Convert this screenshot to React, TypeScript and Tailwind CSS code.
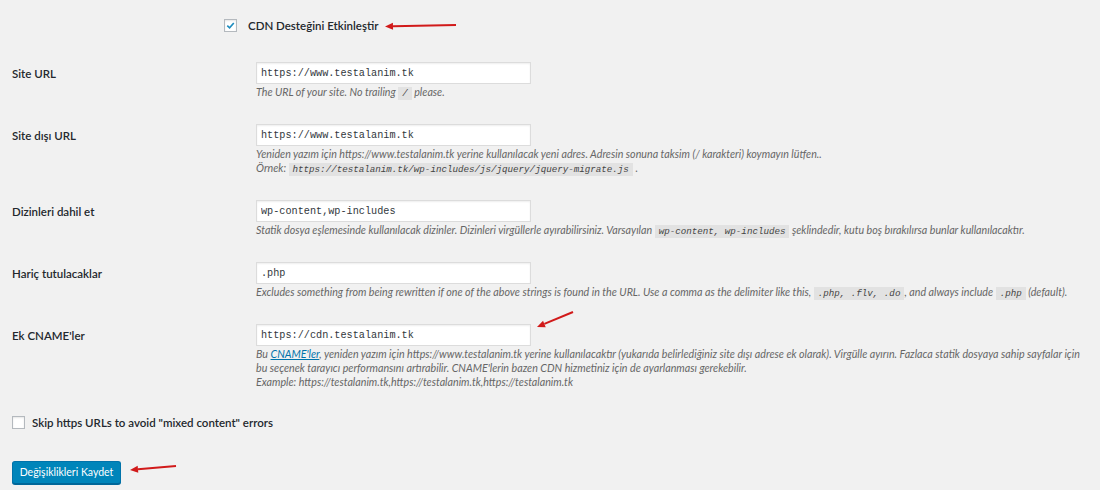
import React from "react"

const label = "text-[11.5px] font-semibold text-[#23282d] leading-[13px]"
const desc = "mt-[1px] text-[10.7px] italic leading-[14px] text-[#666] whitespace-nowrap"
const code = "bg-[#e2e2e2] px-[4px] py-[1px] text-[9.2px] leading-[14px] italic text-[#444]"
const input =
  "block w-[275px] h-[22px] bg-white border border-[#dcdcdc] shadow-[inset_0_1px_2px_rgba(0,0,0,0.07)] px-[4px] text-[10.2px] text-[#32373c] outline-none"

const mono = { fontFamily: "'Liberation Mono', 'DejaVu Sans Mono', monospace" }

function Arrow({ x1, y1, x2, y2 }: { x1: number; y1: number; x2: number; y2: number }) {
  // tail (x1,y1) -> head (x2,y2)
  const a = Math.atan2(y2 - y1, x2 - x1)
  const l = 8
  const w = 3.5
  const bx = x2 - Math.cos(a) * l
  const by = y2 - Math.sin(a) * l
  const px = -Math.sin(a) * w
  const py = Math.cos(a) * w
  return (
    <g>
      <line x1={x1} y1={y1} x2={bx} y2={by} stroke="#d11a1a" strokeWidth={2} />
      <polygon points={`${x2},${y2} ${bx + px},${by + py} ${bx - px},${by - py}`} fill="#d11a1a" />
    </g>
  )
}

function Row({
  name,
  value,
  children
}: {
  name: string
  value: string
  children: React.ReactNode
}) {
  return (
    <div className="flex mt-[23px] first:mt-0">
      <div className="w-[244px] h-[22px] flex items-center">
        <span className={label}>{name}</span>
      </div>
      <div>
        <input className={input} style={mono} defaultValue={value} />
        <div className={desc}>{children}</div>
      </div>
    </div>
  )
}

export default function App() {
  return (
    <div
      className="relative w-full h-[490px] bg-[#f1f1f1] overflow-hidden"
      style={{ fontFamily: "Lato, 'Open Sans', sans-serif" }}
    >
      {/* CDN toggle */}
      <div className="pt-[19px] pl-[224px] flex items-center gap-[11px]">
        <span className="w-[13px] h-[13px] bg-white border border-[#b4b9be] shadow-[inset_0_1px_2px_rgba(0,0,0,0.1)] flex items-center justify-center">
          <svg width="11" height="11" viewBox="0 0 12 12">
            <path d="M2.5 6.2 L5 8.6 L9.6 3.2" fill="none" stroke="#1e8cbe" strokeWidth="1.8" />
          </svg>
        </span>
        <span className={label}>CDN Desteğini Etkinleştir</span>
      </div>

      <div className="pl-[12px] mt-[30px]">
        <Row name="Site URL" value="https://www.testalanim.tk">
          The URL of your site. No trailing{" "}
          <code className={code} style={mono}>/</code> please.
        </Row>

        <Row name="Site dışı URL" value="https://www.testalanim.tk">
          Yeniden yazım için https://www.testalanim.tk yerine kullanılacak yeni adres. Adresin sonuna taksim (/
          karakteri) koymayın lütfen..
          <br />
          Örnek: <code className={code} style={mono}>https://testalanim.tk/wp-includes/js/jquery/jquery-migrate.js</code> .
        </Row>

        <Row name="Dizinleri dahil et" value="wp-content,wp-includes">
          Statik dosya eşlemesinde kullanılacak dizinler. Dizinleri virgüllerle ayırabilirsiniz. Varsayılan{" "}
          <code className={code} style={mono}>wp-content, wp-includes</code> şeklindedir, kutu boş bırakılırsa
          bunlar kullanılacaktır.
        </Row>

        <Row name="Hariç tutulacaklar" value=".php">
          Excludes something from being rewritten if one of the above strings is found in the URL. Use a comma as
          the delimiter like this, <code className={code} style={mono}>.php, .flv, .do</code>, and always include{" "}
          <code className={code} style={mono}>.php</code> (default).
        </Row>

        <Row name="Ek CNAME'ler" value="https://cdn.testalanim.tk">
          Bu <a className="underline text-[#0073aa]">CNAME'ler</a>, yeniden yazım için https://www.testalanim.tk
          yerine kullanılacaktır (yukarıda belirlediğiniz site dışı adrese ek olarak). Virgülle ayırın. Fazlaca
          statik dosyaya sahip sayfalar için
          <br />
          bu seçenek tarayıcı performansını artırabilir. CNAME'lerin bazen CDN hizmetiniz için de ayarlanması
          gerekebilir.
          <br />
          Example: https://testalanim.tk,https://testalanim.tk,https://testalanim.tk
        </Row>

        {/* skip https */}
        <div className="mt-[27px] flex items-center gap-[7px]">
          <span className="w-[13px] h-[13px] bg-white border border-[#b4b9be] shadow-[inset_0_1px_2px_rgba(0,0,0,0.1)]" />
          <span className={label}>Skip https URLs to avoid "mixed content" errors</span>
        </div>

        <button className="mt-[32px] h-[23px] w-[109px] rounded-[3px] bg-[#0085ba] border border-[#0073aa] border-b-[#006799] shadow-[0_1px_0_#006799] text-white text-[10.5px] flex items-center justify-center">
          Değişiklikleri Kaydet
        </button>
      </div>

      {/* annotation arrows */}
      <svg className="absolute inset-0 pointer-events-none" width="1100" height="490">
        <Arrow x1={456} y1={25} x2={385} y2={26.5} />
        <Arrow x1={573} y1={312} x2={537} y2={327} />
        <Arrow x1={176} y1={466} x2={130} y2={470} />
      </svg>
    </div>
  )
}
